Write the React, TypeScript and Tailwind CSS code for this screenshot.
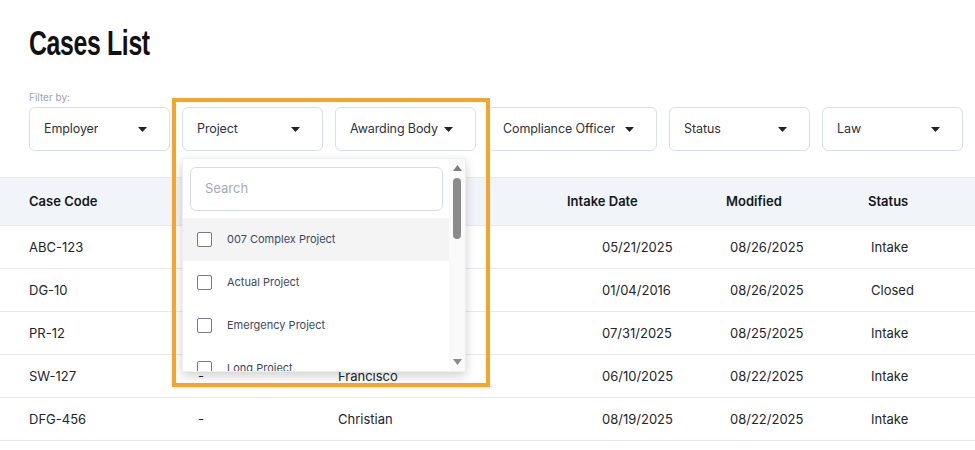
import React from 'react';

type Row = {
  code: string;
  project: string;
  officer: string;
  intake: string;
  modified: string;
  status: string;
};

const FILTERS = [
  { label: 'Employer', w: 'w-[141px]' },
  { label: 'Project', w: 'w-[141px]' },
  { label: 'Awarding Body', w: 'w-[141px]' },
  { label: 'Compliance Officer', w: 'w-[169px]' },
  { label: 'Status', w: 'w-[141px]' },
  { label: 'Law', w: 'w-[141px]' },
];

const ROWS: Row[] = [
  { code: 'ABC-123', project: '-', officer: 'Martin', intake: '05/21/2025', modified: '08/26/2025', status: 'Intake' },
  { code: 'DG-10', project: '-', officer: 'Laura', intake: '01/04/2016', modified: '08/26/2025', status: 'Closed' },
  { code: 'PR-12', project: '-', officer: 'Daniel', intake: '07/31/2025', modified: '08/25/2025', status: 'Intake' },
  { code: 'SW-127', project: '-', officer: 'Francisco', intake: '06/10/2025', modified: '08/22/2025', status: 'Intake' },
  { code: 'DFG-456', project: '-', officer: 'Christian', intake: '08/19/2025', modified: '08/22/2025', status: 'Intake' },
];

const PROJECTS = ['007 Complex Project', 'Actual Project', 'Emergency Project', 'Long Project'];

const Caret = () => (
  <svg width="9" height="5" viewBox="0 0 9 5" className="shrink-0">
    <path d="M0 0h9L4.5 5z" fill="#1f2328" />
  </svg>
);

// Dropdown ouvert sous le filtre "Project"
const ProjectMenu = () => (
  <div className="absolute left-0 top-[51px] z-20 w-[284px] h-[214px] bg-white border border-[#eceef2] shadow-[0_4px_10px_rgba(0,0,0,0.18)] flex">
    <div className="flex-1 flex flex-col overflow-hidden">
      <div className="pl-[7px] pr-[7px] pt-[8px] pb-[7px]">
        <div className="h-[44px] w-[253px] rounded-[6px] border border-[#d6dce7] flex items-center pl-[14px] text-[13px] text-[#a3abbb]">
          Search
        </div>
      </div>
      {PROJECTS.map((p, i) => (
        <div
          key={p}
          className={`h-[43px] shrink-0 flex items-center pl-[14px] gap-[15px] ${i === 0 ? 'bg-[#f4f4f5]' : ''}`}
        >
          <div className="w-[15px] h-[15px] rounded-[2px] border-[1.5px] border-[#767b85] bg-white shrink-0" />
          <span className="text-[11px] text-[#3d4862]">{p}</span>
        </div>
      ))}
    </div>
    <div className="w-[16px] bg-[#fafafa] flex flex-col items-center pt-[6px] pb-[6px]">
      <svg width="9" height="6" viewBox="0 0 9 6">
        <path d="M4.5 0L9 6H0z" fill="#7d7d7d" />
      </svg>
      <div className="mt-[7px] w-[8px] h-[61px] rounded-full bg-[#8b8b8b]" />
      <div className="flex-1" />
      <svg width="9" height="6" viewBox="0 0 9 6">
        <path d="M0 0h9L4.5 6z" fill="#8b8b8b" />
      </svg>
    </div>
  </div>
);

const App: React.FC = () => {
  return (
    <div className="relative w-[975px] h-[450px] bg-white overflow-hidden font-['Inter','Liberation_Sans',sans-serif] text-[#1f2328]">
      {/* Titre */}
      <div className="pl-[29px] pt-[23px] h-[90px]">
        <h1 className="font-['Liberation_Sans',sans-serif] font-bold text-[35px] leading-[40px] tracking-[-0.5px] text-[#111] origin-left scale-x-[0.71]">
          Cases List
        </h1>
      </div>

      {/* Filtres */}
      <div className="pl-[29px]">
        <div className="text-[10px] leading-[14px] text-[#97a3b6] h-[17px]">Filter by:</div>
        <div className="flex gap-[12px]">
          {FILTERS.map((f) => (
            <div key={f.label} className={`relative ${f.w}`}>
              <div className="h-[44px] rounded-[6px] border border-[#d9dfe9] bg-white flex items-center justify-between gap-[5px] pl-[14px] pr-[22px]">
                <span className="text-[12.5px] tracking-[-0.1px] text-[#2e333b] whitespace-nowrap overflow-hidden">{f.label}</span>
                <Caret />
              </div>
              {f.label === 'Project' && <ProjectMenu />}
            </div>
          ))}
        </div>
      </div>

      {/* Tableau */}
      <div className="mt-[26px]">
        <div className="h-[49px] bg-[#f1f4f9] border-t border-b border-[#e4e8ef] flex items-center pl-[29px] text-[13px] font-semibold text-[#15181c]">
          <div className="w-[169px]">Case Code</div>
          <div className="w-[140px]">Project</div>
          <div className="w-[229px]">Compliance Officer</div>
          <div className="w-[159px]">Intake Date</div>
          <div className="w-[142px]">Modified</div>
          <div className="flex-1">Status</div>
        </div>
        {ROWS.map((r) => (
          <div key={r.code} className="h-[43px] border-b border-[#e6e9ef] flex items-center pt-[2px] pl-[29px] text-[13px] text-[#22262b]">
            <div className="w-[169px]">{r.code}</div>
            <div className="w-[140px]">{r.project}</div>
            <div className="w-[264px]">{r.officer}</div>
            <div className="w-[128px]">{r.intake}</div>
            <div className="w-[141px]">{r.modified}</div>
            <div className="flex-1">{r.status}</div>
          </div>
        ))}
      </div>

      {/* Encadré orange d'annotation */}
      <div className="absolute left-[172px] top-[98px] w-[318px] h-[289px] border-4 border-[#f7a42b] z-30 pointer-events-none" />
    </div>
  );
};

export default App;
